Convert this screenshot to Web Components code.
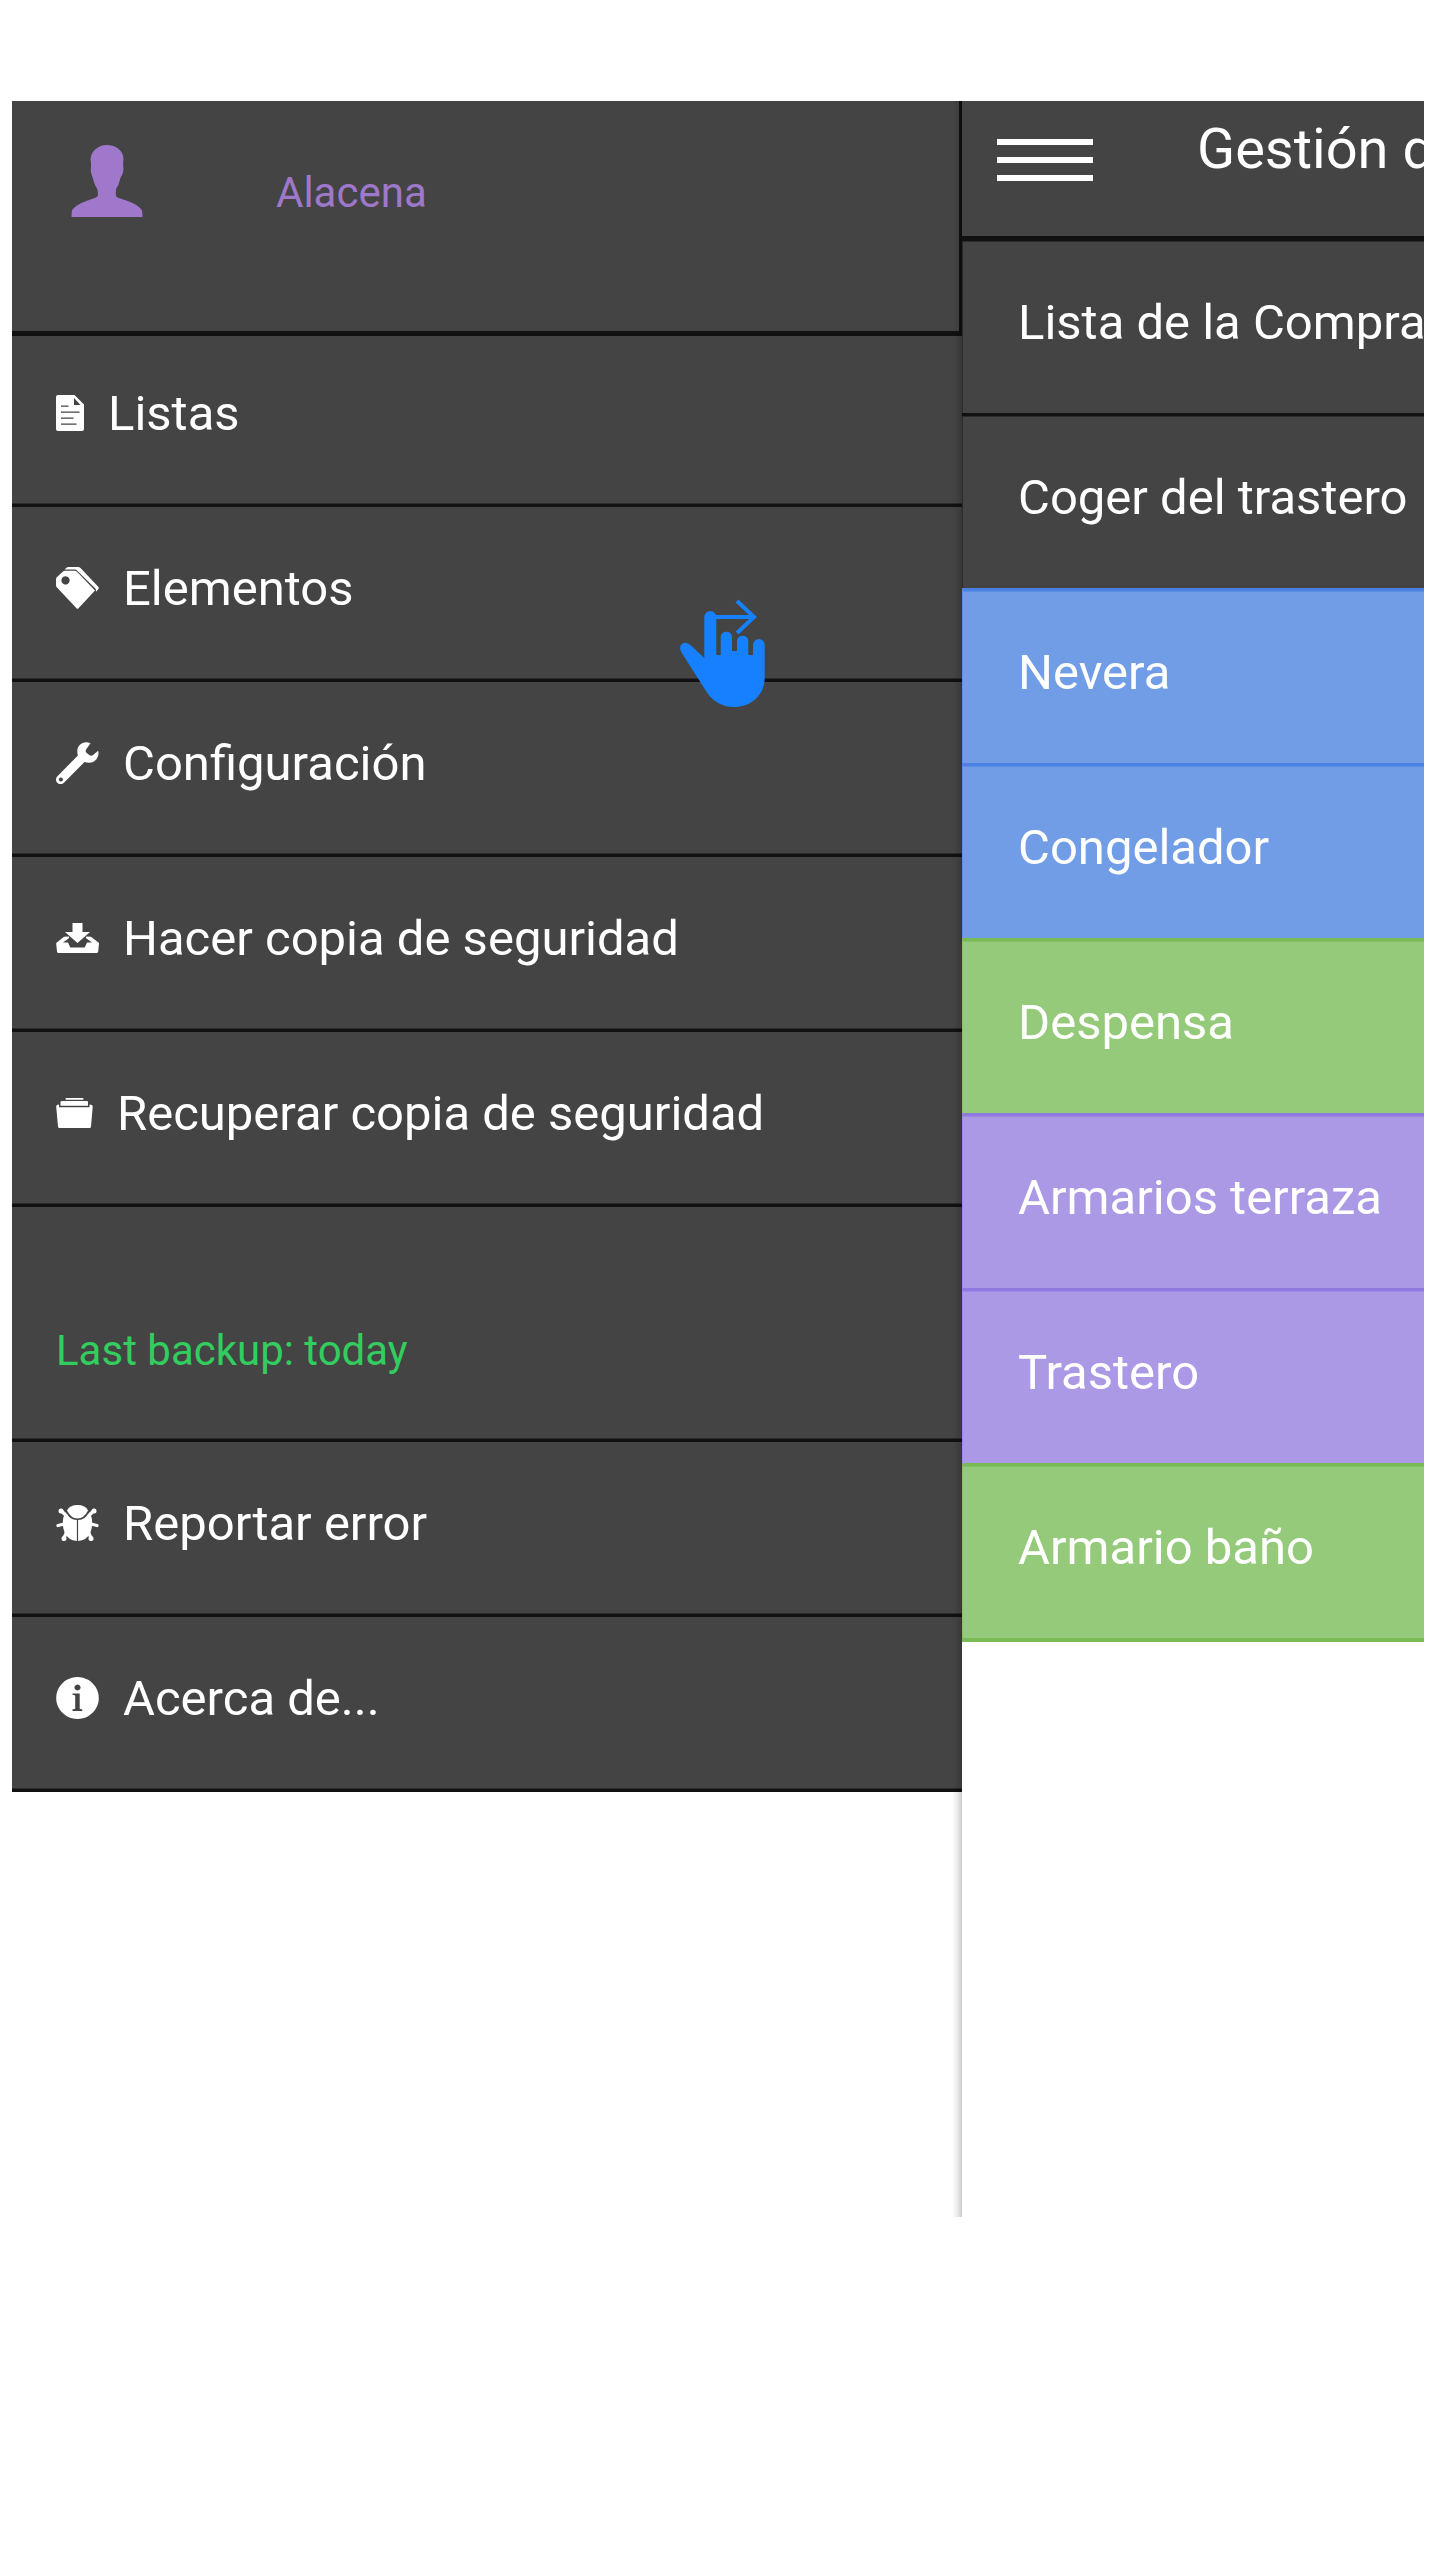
<!DOCTYPE html>
<html lang="es">
<head>
<meta charset="utf-8">
<meta name="viewport" content="width=device-width, initial-scale=1">
<title>Alacena</title>
<style>
  body { margin: 0; background: #fff; color: #fff; font: 49px/56px Roboto, sans-serif; }
</style>
</head>
<body>
<alacena-app>
  <side-panel slot="menu">
    <user-header slot="header">Alacena</user-header>
    <menu-item icon="doc" first>Listas</menu-item>
    <menu-item icon="tags">Elementos</menu-item>
    <menu-item icon="wrench">Configuración</menu-item>
    <menu-item icon="save">Hacer copia de seguridad</menu-item>
    <menu-item icon="folder">Recuperar copia de seguridad</menu-item>
    <backup-status>Last backup: today</backup-status>
    <menu-item icon="bug">Reportar error</menu-item>
    <menu-item icon="info">Acerca de...</menu-item>
    <swipe-hint slot="hint"></swipe-hint>
  </side-panel>
  <list-page slot="page" heading="Gestión d">
    <list-row first>Lista de la Compra</list-row>
    <list-row>Coger del trastero</list-row>
    <list-row tone="blue">Nevera</list-row>
    <list-row tone="blue">Congelador</list-row>
    <list-row tone="green">Despensa</list-row>
    <list-row tone="purple">Armarios terraza</list-row>
    <list-row tone="purple">Trastero</list-row>
    <list-row tone="green" last>Armario baño</list-row>
  </list-page>
</alacena-app>

<script>
const define = (name, render) => customElements.define(name, class extends HTMLElement {
  connectedCallback() {
    if (this.shadowRoot) return;
    this.attachShadow({ mode: 'open' }).innerHTML =
      '<style>*,*::before,*::after{box-sizing:border-box}:host{display:block;box-sizing:border-box}</style>' + render(this);
  }
});

const icons = {
  doc: [28, '<path fill-rule="evenodd" d="M2 3h16.500L28 12.500V37q0 2-2 2H2q-2 0-2-2V5q0-2 2-2zM18 6v7h6.500zM5 13.500v1.200h7.500v-1.200zM5 19.500v1.300h18.500v-1.300zM5 25.500v1.300h12.500v-1.300zM5 31.500v1.300h15.500v-1.300z"/>'],
  tags: [43, '<path fill-rule="evenodd" d="M1 10L7 4.500q1-.7 2-.7h9.500q1.500 0 2.500 1L39 23.500 22.500 41.300q-1 1-2 0L1 20.500Q0 19.500 0 18v-6q0-1.200 1-2zM9.500 9.300a4.100 4.100 0 1 0 .01 0z"/><path d="M8.500 2.600L10.500.7Q11 0 12.500 0H22q1.500 0 2.500 1l17.500 18.500q1.500 1.500 0 3l-2 2.200-.2-2.700L21.500 4q-1.200-1.400-3-1.400z"/>'],
  wrench: [43, '<path fill-rule="evenodd" d="M34.500 1.200C28-1.700 21 2.500 21.300 9.500q.1 2.600.6 4L1.400 34.200a4.600 4.600 0 1 0 6.500 6.500L28.500 20q7.500 2.500 12-2.700 3-4 1.600-8.500l-5.300 4.500q-1.700 1-3.600-.2l-3-2.600q-1.200-1.700.2-3.400zM4.900 35.500a2 2 0 1 1-.01 0z"/>'],
  save: [43, '<path d="M16.500 6h10v9H34L21.500 26 9 15h7.500z"/><path d="M12 19.800H7.800l5.200-.3.200 1.500-6.200 4.600h5l2.300 5h14.400l2.300-5h5l-6.200-4.600.5-1.500 4.600.3 7.600 5.700q.6.500.5 1.300l-.8 7.700Q41.800 36 40.500 36h-38q-1.300 0-1.500-1.500L.2 26.800q-.1-.8.6-1.300L8 19.800z"/>'],
  folder: [37, '<rect x="9.500" y="6" width="18" height="1.700" rx=".8"/><path d="M6 9h25q1 0 1 1v3.800H4.500V10q0-1 1.500-1z"/><path d="M3 12.500v2.800h30.500v-2.800q3 0 3.200 2.300L35 34.500q-.1 1.500-1.500 1.500H3.500Q2.100 36 2 34.500L.2 14.800Q.3 12.500 3 12.500z"/>'],
  bug: [43, '<path d="M11 8.500Q13.500 3 21.500 3t10.500 5.500Q28 16.500 21.500 16.500T11 8.500z"/><path d="M9.300 10.200Q13.500 17.500 20.900 18v21q-8.600-.6-12.200-8Q4.500 20 9.300 10.200zM33.700 10.200Q29.500 17.500 22.100 18v21q8.600-.6 12.200-8 4.200-11-.6-20.800z"/><path d="M5 8.500l5.500 5.500M38 8.500L32.500 14M2 23.500l6-1.500M41 23.500L35 22M7.500 37l2.500-5.500M35.500 37L33 31.500" fill="none" stroke="#fff" stroke-width="3.200" stroke-linecap="round"/><circle cx="5" cy="9" r="2.500"/><circle cx="38" cy="9" r="2.500"/><circle cx="8" cy="36.500" r="2.500"/><circle cx="35" cy="36.500" r="2.500"/>'],
  info: [43, '<path fill-rule="evenodd" d="M21.500 0a21.300 21 0 1 1-.01 0zM21.500 7.500a3 3 0 1 0 .01 0zM16.500 16.500v1.300l2.700.8v13.200l-2.700.8V34h9.800v-1.400l-2.600-.8V16.500z"/>']
};

define('alacena-app', () => `
  <style>
    :host { display: grid; grid-template-columns: 950fr 462fr; align-items: start; padding: 101px 16px 0 12px; }
    ::slotted(*) { min-width: 0; }
  </style>
  <slot name="menu"></slot><slot name="page"></slot>`);

define('side-panel', () => `
  <style>
    :host { position: relative; min-height: calc(100vh - 444px); }
    .edge { position: absolute; top: 0; right: 0; bottom: 0; width: 10px; pointer-events: none;
      background: linear-gradient(to right, rgba(0,0,0,0), rgba(0,0,0,.07) 50%, rgba(0,0,0,.2)); }
    ::slotted(swipe-hint) { position: absolute; left: 668px; top: 497px; }
  </style>
  <slot name="header"></slot>
  <nav><slot></slot></nav>
  <div class="edge"></div>
  <slot name="hint"></slot>`);

define('user-header', () => `
  <style>
    :host { display: flex; gap: 133px; height: 235px; padding: 44px 59px; background: #444; color: #9f78cb;
      border-right: 3px solid #111; border-bottom: 5px solid #111; font-size: 42px; line-height: 48px; }
    svg { width: 72px; height: 72px; fill: currentColor; }
    span { padding-top: 24px; }
  </style>
  <svg viewBox="0 0 72 72" aria-hidden="true"><path d="M36 0C45 0 52.500 6 52.500 14q-.6 4-.3 7.500 1 5-1.700 9.500-1.400 1.800-1.900 5-.8 4.500-3.300 7.500-.8 2.500-.3 7.500l1.500 1.600L58 56.500q9 3.500 12.500 8 1 1.500 1 7.500H.5q0-6 1-7.500 3.500-4.500 12.500-8l11-3.900 1.800-1.600q.4-5-.8-7.500-2.500-4-3.400-7.500-.6-3.200-1.600-5Q19 26.500 20 21.500 20.200 18 19.500 14 20 6 29 1.300 32 0 36 0z"/></svg>
  <span><slot></slot></span>`);

define('menu-item', el => {
  const [width, shape] = icons[el.getAttribute('icon')];
  return `
  <style>
    a { display: flex; gap: 24px; height: 175px; padding: 54px 44px 0; background: #444; color: inherit;
      text-decoration: none; border-bottom: 3px solid #111; box-shadow: inset 0 -1px #2b2b2b; white-space: nowrap; }
    :host([first]) a { height: 171px; padding-top: 50px; }
    svg { flex: none; height: 42px; margin-top: 6px; fill: currentColor; }
  </style>
  <a href="#"><svg width="${width}" viewBox="0 0 ${width} 42" aria-hidden="true">${shape}</svg><span><slot></slot></span></a>`;
});

define('backup-status', () => `
  <style>
    :host { height: 235px; padding: 120px 44px 0; background: #444; color: #33cd5f; font-size: 42px; line-height: 48px;
      border-bottom: 3px solid #111; box-shadow: inset 0 -1px #2b2b2b; }
  </style>
  <slot></slot>`);

define('swipe-hint', () => `
  <style>svg { display: block; }</style>
  <svg width="86" height="110" viewBox="0 0 86 110" fill="#1680ff" aria-hidden="true">
    <path d="M24.300 60V19a6 6 0 0 1 12 0V57h4.400V38.700a5.700 5.700 0 0 1 11.300 0V53h5V42.700a5.700 5.700 0 0 1 11.300 0V57H73V46.800a5.800 5.800 0 0 1 11.700 0V80C84.500 97 71 109 54 109 42 109 32 103 26 93L1.200 54Q-1.500 48 2.500 45.500 6.500 43.500 11 47.500z"/>
    <path d="M34 19H74M57 3L74 19 57 35" fill="none" stroke="#1680ff" stroke-width="4"/>
  </svg>`);

define('list-page', el => `
  <style>
    :host { overflow: hidden; }
    header { display: flex; align-items: flex-start; gap: 104px; height: 140px; padding: 16px 0 0 35px;
      background: #444; border-bottom: 5px solid #111; }
    button { flex: none; margin: 22px 0 0; padding: 0; border: 0; background: none; color: #fff; }
    svg { display: block; fill: currentColor; }
    h1 { margin: 0; font-size: 56px; line-height: 64px; font-weight: 400; white-space: nowrap; }
  </style>
  <header>
    <button type="button" aria-label="Menú"><svg width="96" height="43" viewBox="0 0 96 43"><path d="M0 0h96v6H0zM0 18h96v6H0zM0 36h96v6H0z"/></svg></button>
    <h1>${el.getAttribute('heading')}</h1>
  </header>
  <main><slot></slot></main>`);

define('list-row', () => `
  <style>
    :host { --fill: #444; --line: #111; --edge: #2b2b2b; }
    :host([tone=blue]) { --fill: #719de7; --line: #4a81e2; --edge: #5a8fe8; }
    :host([tone=green]) { --fill: #95ca7a; --line: #79ba55; --edge: #83c263; }
    :host([tone=purple]) { --fill: #ab99e5; --line: #9079df; --edge: #9f85e8; }
    a { display: block; height: 175px; padding: 54px 0 0 56px; background: var(--fill); color: inherit; text-decoration: none;
      border-top: 3px solid var(--line); box-shadow: inset 1px 1px var(--edge); white-space: nowrap; }
    :host([first]) a { height: 172px; border-top: 0; }
    :host([last]) a { height: 179px; border-bottom: 4px solid var(--line); }
  </style>
  <a href="#"><slot></slot></a>`);
</script>
</body>
</html>
